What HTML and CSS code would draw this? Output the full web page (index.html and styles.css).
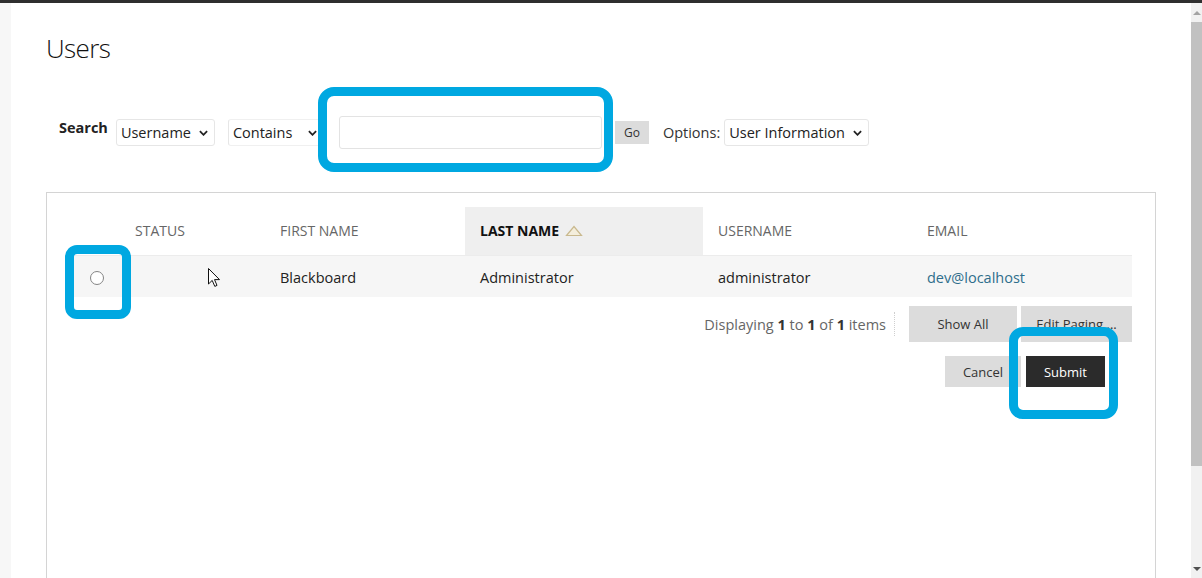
FILE: index.html
```html
<!DOCTYPE html>
<html lang="en">
<head>
    <meta charset="UTF-8" />
    <title>Users</title>
    <link rel="stylesheet" href="styles.css">
</head>
<body>
    <div class="topbar"></div>
    <div class="window">
        <div class="gutter"></div>

        <div class="main">
            <h1 class="page-title">Users</h1>

            <div class="search-bar">
                <span class="search-label">Search</span>
                <div class="select select-field">
                    <span>Username</span>
                    <svg class="chevron" viewBox="0 0 10 6"><path d="M1 1l4 4 4-4" /></svg>
                </div>
                <div class="select select-op">
                    <span>Contains</span>
                    <svg class="chevron" viewBox="0 0 10 6"><path d="M1 1l4 4 4-4" /></svg>
                </div>
                <input class="search-input" type="text" />
                <button class="go-btn">Go</button>
                <span class="options-label">Options:</span>
                <div class="select select-options">
                    <span>User Information</span>
                    <svg class="chevron" viewBox="0 0 10 6"><path d="M1 1l4 4 4-4" /></svg>
                </div>
            </div>

            <div class="list-box">
                <table class="user-table">
                    <thead>
                        <tr>
                            <th class="col-radio"></th>
                            <th class="col-status">Status</th>
                            <th class="col-first">First Name</th>
                            <th class="col-last sorted">Last Name
                                <svg class="sort-icon" viewBox="0 0 18 12"><path d="M1.5 10.5L9 1.5l7.5 9z" /></svg>
                            </th>
                            <th class="col-user">Username</th>
                            <th class="col-email">Email</th>
                        </tr>
                    </thead>
                    <tbody>
                        <tr>
                            <td class="col-radio"><span class="radio"></span></td>
                            <td></td>
                            <td>Blackboard</td>
                            <td>Administrator</td>
                            <td>administrator</td>
                            <td><a href="#">dev@localhost</a></td>
                        </tr>
                    </tbody>
                </table>

                <div class="paging">
                    <span class="paging-info">Displaying <b>1</b> to <b>1</b> of <b>1</b> items</span>
                    <span class="paging-sep"></span>
                    <button class="btn btn-show">Show All</button>
                    <button class="btn btn-edit">Edit Paging ...</button>
                </div>

                <div class="actions">
                    <button class="btn btn-cancel">Cancel</button>
                    <button class="btn btn-submit">Submit</button>
                </div>
            </div>
        </div>

        <div class="scrollbar">
            <div class="scroll-arrow"><span class="tri-up"></span></div>
            <div class="scroll-thumb"></div>
            <div class="scroll-track"></div>
            <div class="scroll-arrow"><span class="tri-down"></span></div>
        </div>
    </div>

    <!-- callout highlights drawn over the screen -->
    <div class="callout callout-search"></div>
    <div class="callout callout-radio"></div>
    <div class="callout callout-submit"></div>

    <svg class="cursor" viewBox="0 0 12 19">
        <path d="M0.5 0.5v15.5l3.7-3.6 2.6 6 2.2-1-2.5-5.8h5z" />
    </svg>
</body>
</html>
```

FILE: styles.css
```css
* {
    margin: 0;
    padding: 0;
    box-sizing: border-box;
}
body {
    position: relative;
    height: 578px;
    overflow: hidden;
    background: #fff;
    font-family: "Open Sans", Arial, sans-serif;
    color: #333;
}
.topbar {
    height: 3px;
    background: #2f2f2f;
}
.window {
    display: flex;
    height: 575px;
}
.gutter {
    width: 11px;
    background: #f7f7f7;
}
.main {
    flex: 1;
    padding: 28px 35px 0 35px;
    overflow: hidden;
}
.page-title {
    font-size: 26px;
    line-height: 34px;
    font-weight: 300;
    color: #111;
    letter-spacing: -0.6px;
}

/* search row */
.search-bar {
    display: flex;
    align-items: center;
    height: 33px;
    margin-top: 51px;
    padding-left: 13px;
}
.search-label {
    align-self: flex-start;
    margin-top: 2px;
    font-size: 14.5px;
    line-height: 20px;
    font-weight: 700;
    color: #222;
    margin-right: 8px;
}
.select {
    display: flex;
    align-items: center;
    justify-content: space-between;
    height: 27px;
    padding: 0 6px 0 4px;
    border: 1px solid #e6e6e6;
    border-radius: 3px;
    font-size: 14.5px;
    color: #222;
}
.chevron {
    width: 9px;
    height: 6px;
    fill: none;
    stroke: #222;
    stroke-width: 2;
}
.select-field {
    width: 99px;
}
.select-op {
    width: 96px;
    margin-left: 13px;
    border-color: #fff;
    border-left-color: #e6e6e6;
    border-top-color: #f0f0f0;
    border-bottom-color: #f0f0f0;
}
.search-input {
    width: 263px;
    height: 33px;
    margin-left: 15px;
    border: 1px solid #e3e3e3;
    border-radius: 3px;
    background: #fff;
}
.go-btn {
    width: 34px;
    height: 23px;
    margin-left: 13px;
    border: none;
    background: #dcdcdc;
    font-family: inherit;
    font-size: 12px;
    color: #333;
}
.options-label {
    margin-left: 14px;
    font-size: 14.5px;
    color: #333;
}
.select-options {
    width: 145px;
    margin-left: 4px;
}

/* list */
.list-box {
    margin-top: 43px;
    height: 400px;
    border: 1px solid #d4d4d4;
    border-bottom: none;
    padding: 14px 23px 0 19px;
}
.user-table {
    width: 100%;
    border-collapse: collapse;
    font-size: 14.5px;
}
.user-table th {
    height: 48px;
    padding-left: 15px;
    text-align: left;
    font-size: 14px;
    font-weight: 400;
    text-transform: uppercase;
    color: #666;
    border-bottom: 1px solid #ececec;
}
.user-table th.sorted {
    background: #efefef;
    color: #111;
    font-weight: 700;
}
.sort-icon {
    width: 18px;
    height: 12px;
    margin-left: 2px;
    vertical-align: -1px;
    fill: #f4eedc;
    stroke: #c9b98e;
    stroke-width: 1.2;
}
.user-table td {
    height: 42px;
    padding-left: 15px;
    padding-top: 2px;
    background: #f6f6f6;
    color: #222;
}
.user-table td a {
    color: #2f6e8c;
    text-decoration: none;
}
.col-radio { width: 54px; }
.col-status { width: 145px; }
.col-first { width: 200px; }
.col-last { width: 238px; }
.col-user { width: 209px; }
.user-table td.col-radio {
    padding-left: 24px;
    padding-top: 4px;
}
.radio {
    display: block;
    width: 14px;
    height: 14px;
    border: 1px solid #858585;
    border-radius: 50%;
    background: #fff;
}

.paging {
    display: flex;
    justify-content: flex-end;
    align-items: center;
    margin-top: 9px;
}
.paging-info {
    font-size: 14.5px;
    color: #666;
}
.paging-info b {
    color: #333;
}
.paging-sep {
    width: 0;
    height: 24px;
    margin: 0 14px 0 8px;
    border-left: 1px dotted #cfcfcf;
}
.btn {
    height: 36px;
    border: none;
    background: #dcdcdc;
    font-family: inherit;
    font-size: 13px;
    color: #333;
}
.btn-show { width: 108px; }
.btn-edit { width: 111px; margin-left: 4px; }

.actions {
    display: flex;
    justify-content: flex-end;
    gap: 5px;
    margin-top: 14px;
    padding-right: 27px;
}
.btn-cancel {
    width: 76px;
    height: 31px;
}
.btn-submit {
    width: 79px;
    height: 31px;
    background: #2b2b2b;
    color: #fff;
}

/* scrollbar */
.scrollbar {
    width: 11px;
    display: flex;
    flex-direction: column;
    background: #f1f1f1;
}
.scroll-arrow {
    height: 19px;
    display: flex;
    justify-content: center;
    align-items: center;
}
.tri-up {
    border: 4px solid transparent;
    border-bottom: 4px solid #a3a3a3;
    border-top: none;
}
.tri-down {
    border: 4px solid transparent;
    border-top: 4px solid #505050;
    border-bottom: none;
}
.scroll-thumb {
    height: 444px;
    background: #c1c1c1;
}
.scroll-track {
    flex: 1;
}

/* overlay highlights */
.callout {
    position: absolute;
    border: 9px solid #00a8e1;
    border-radius: 16px;
}
.callout-search {
    left: 318px;
    top: 87px;
    width: 295px;
    height: 85px;
}
.callout-radio {
    left: 65px;
    top: 245px;
    width: 66px;
    height: 74px;
    border-radius: 12px;
}
.callout-submit {
    left: 1009px;
    top: 327px;
    width: 109px;
    height: 92px;
    border-radius: 14px;
}
.cursor {
    position: absolute;
    left: 208px;
    top: 268px;
    width: 12px;
    height: 19px;
    fill: #fff;
    stroke: #111;
    stroke-width: 1;
}
```
